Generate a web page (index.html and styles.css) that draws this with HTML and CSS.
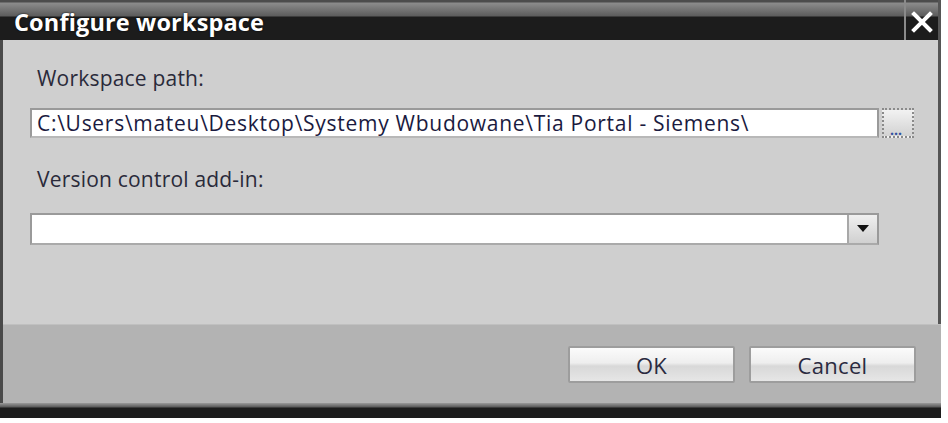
FILE: index.html
```html
<!DOCTYPE html>
<html>
<head>
<meta charset="utf-8">
<link rel="stylesheet" href="styles.css">
</head>
<body>
<div class="window">
  <div class="titlebar">
    <div class="title">Configure workspace</div>
    <div class="close">
      <svg width="22" height="22" viewBox="0 0 22 22"><path d="M3 3 L19 19 M19 3 L3 19" stroke="#fff" stroke-width="4" stroke-linecap="square"/></svg>
    </div>
  </div>
  <div class="content">
    <div class="label">Workspace path:</div>
    <div class="row">
      <div class="input">C:\Users\mateu\Desktop\Systemy Wbudowane\Tia Portal - Siemens\</div>
      <div class="browse"><span class="dots">...</span></div>
    </div>
    <div class="label label2">Version control add-in:</div>
    <div class="select">
      <div class="select-field"></div>
      <div class="select-btn"><svg width="12" height="8" viewBox="0 0 12 8"><path d="M0 0 H12 L6 7 Z" fill="#111"/></svg></div>
    </div>
  </div>
  <div class="footer">
    <div class="btn">OK</div>
    <div class="btn">Cancel</div>
  </div>
  <div class="bottombar"></div>
</div>
</body>
</html>
```
FILE: styles.css
```css
html, body {
  margin: 0;
  padding: 0;
  background: #fff;
}
.window {
  width: 938px;
  height: 420px;
  display: flex;
  flex-direction: column;
  border-left: 3px solid #4a4a4a;
  box-shadow: inset -3px 0 0 #555;
  background: #cfcfcf;
  font-family: "Open Sans", "Noto Sans", sans-serif;
}
.titlebar {
  height: 40px;
  flex: none;
  display: flex;
  background: linear-gradient(#4c4c4c 0, #4c4c4c 2px, #8c8c8c 3px, #5c5c5c 16px, #1c1c1c 17px, #1c1c1c 100%);
  margin-left: -3px;
}
.title {
  flex: 1;
  color: #fff;
  font-weight: 700;
  font-size: 23.5px;
  padding-left: 14px;
  padding-top: 6px;
  letter-spacing: 0.15px;
  text-shadow: 0 0 2px #000;
}
.close {
  width: 37px;
  border-left: 2px solid #8a8a8a;
  display: flex;
  align-items: center;
  justify-content: center;
  padding-top: 3px;
  box-sizing: border-box;
  border-right: 3px solid #555;
}
.content {
  flex: 1;
  padding: 0 0 0 27px;
  color: #2a2a3a;
  font-size: 21px;
}
.label {
  padding-left: 7px;
  margin-top: 24px;
  height: 30px;
  letter-spacing: 0.2px;
}
.label2 {
  margin-top: 27px;
}
.row {
  display: flex;
  margin-top: 14px;
  gap: 3px;
}
.input {
  width: 840px;
  height: 26px;
  background: #fff;
  border: 2px solid #9a9a9a;
  border-bottom-color: #b8b8b8;
  padding-left: 5px;
  line-height: 26px;
  color: #1a1a40;
  letter-spacing: 0.72px;
  white-space: nowrap;
}
.browse {
  width: 28px;
  height: 26px;
  border: 2px dotted #8a8a8a;
  background: linear-gradient(#f2f2f2, #d2d2d2);
  position: relative;
}
.dots {
  position: absolute;
  left: 6px;
  bottom: 1px;
  font-size: 14px;
  font-weight: 700;
  line-height: 10px;
  color: #3050a0;
}
.select {
  display: flex;
  width: 845px;
  height: 28px;
  margin-top: 18px;
  border: 2px solid #9a9a9a;
  border-bottom-color: #aaa;
  background: #fff;
}
.select-field {
  flex: 1;
}
.select-btn {
  width: 28px;
  border-left: 2px solid #a8a8a8;
  background: linear-gradient(#f0f0f0, #d0d0d0);
  display: flex;
  align-items: center;
  justify-content: center;
}
.footer {
  flex: none;
  height: 79px;
  background: #b3b3b3;
  border-top: 1px solid #c0c0c0;
  display: flex;
  justify-content: flex-end;
  align-items: flex-start;
  gap: 14px;
  padding: 21px 25px 0 0;
  box-sizing: border-box;
}
.btn {
  width: 163px;
  height: 33px;
  border: 2px solid #9d9d9d;
  border-radius: 2px;
  background: linear-gradient(#fbfbfb 0%, #eeeeee 45%, #d8d8d8 55%, #e6e6e6 100%);
  display: flex;
  align-items: center;
  justify-content: center;
  font-size: 22px;
  letter-spacing: 0.3px;
  color: #2a2a40;
}
.bottombar {
  flex: none;
  height: 17px;
  background: linear-gradient(#9a9a9a 0, #5a5a5a 4px, #1c1c1c 5px, #1c1c1c 15px, #fff 15px);
  margin-left: -3px;
}
```
